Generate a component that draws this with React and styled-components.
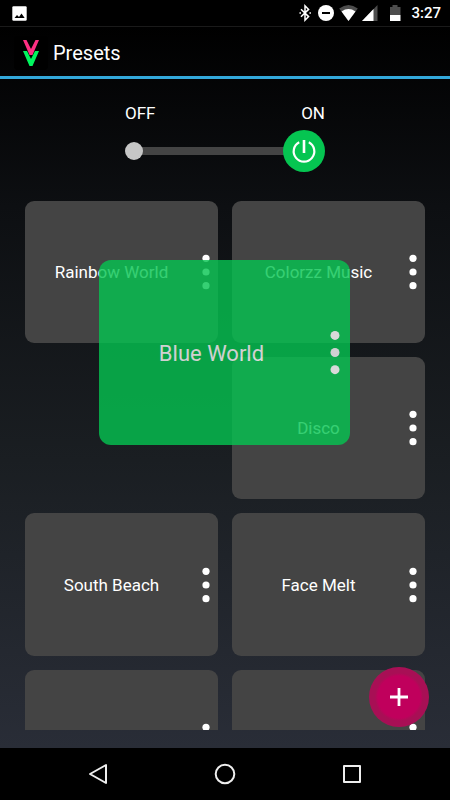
import React, { useState } from "react";
import styled, { createGlobalStyle } from "styled-components";

const GlobalStyle = createGlobalStyle`
  * {
    box-sizing: border-box;
  }

  body {
    margin: 0;
    background: #000;
    color: #fff;
    font-family: Roboto, "Liberation Sans", sans-serif;
  }

  button {
    padding: 0;
    border: 0;
    background: none;
    color: inherit;
    font: inherit;
    cursor: pointer;
  }

  svg {
    display: block;
    flex: none;
  }
`;

const Screen = styled.div`
  position: relative;
  display: flex;
  flex-direction: column;
  height: 100vh;
  overflow: hidden;
`;

const StatusBar = styled.div`
  display: flex;
  align-items: center;
  justify-content: space-between;
  height: 26px;
  padding: 0 9px 0 12px;
  background: #000;
`;

const StatusIcons = styled.div`
  display: flex;
  align-items: center;
  gap: 3px;
`;

const Clock = styled.time`
  margin-left: 7px;
  font-size: 15px;
  line-height: 28px;
  font-weight: 500;
`;

const Window = styled.div`
  display: flex;
  flex: 1;
  flex-direction: column;
  min-height: 0;
  background: linear-gradient(#000, #0d0f12 25%, #1a1e22 60%, #292d37);
`;

const AppBar = styled.header`
  display: flex;
  align-items: center;
  gap: 5px;
  height: 53px;
  padding: 2px 0 0 14px;
  border-top: 1px solid #1a1a1a;
  border-bottom: 3px solid #33a9dc;
`;

const Title = styled.h1`
  margin: 0;
  font-size: 20px;
  line-height: 24px;
  font-weight: 400;
`;

const PowerSection = styled.div`
  display: flex;
  flex-direction: column;
  width: 200px;
  margin: 22px auto 29px;
`;

const PowerLabels = styled.div`
  display: flex;
  justify-content: space-between;
  height: 29px;
  font-size: 17px;
  line-height: 24px;
`;

const PowerSwitch = styled.label`
  position: relative;
  display: flex;
  align-items: center;
  justify-content: ${({ $on }) => ($on ? "flex-end" : "flex-start")};
  height: 42px;
  cursor: pointer;

  &::before {
    content: "";
    position: absolute;
    left: 8px;
    right: 8px;
    height: 8px;
    background: #444;
  }

  &::after {
    content: "";
    position: absolute;
    ${({ $on }) => ($on ? "left: 0;" : "right: 0;")}
    width: 18px;
    height: 18px;
    border-radius: 50%;
    background: #c6c6c6;
  }
`;

const PowerInput = styled.input`
  position: absolute;
  inset: 0;
  margin: 0;
  opacity: 0;
`;

const PowerThumb = styled.span`
  z-index: 1;
  display: grid;
  place-items: center;
  width: 42px;
  height: 42px;
  border-radius: 50%;
  background: #05c551;
`;

const PresetGrid = styled.main`
  display: grid;
  flex: 1;
  grid-template-columns: 1fr 1fr;
  align-content: start;
  gap: 14px;
  min-height: 0;
  margin: 0 25px 18px;
  overflow-y: auto;
  scrollbar-width: none;
`;

const Card = styled.section`
  display: flex;
  align-items: center;
  aspect-ratio: 19 / 14;
  padding-right: 8px;
  border-radius: 9px;
  background: #444;
`;

const CardName = styled.button`
  flex: 1;
  align-self: stretch;
  padding-right: 4px;
  font-size: 17px;
  line-height: 24px;
`;

const DraggedCard = styled(Card)`
  position: absolute;
  left: 99px;
  top: 260px;
  width: 251px;
  padding-right: 10px;
  border-radius: 12px;
  background: #05c551;
  opacity: 0.8;

  ${CardName} {
    padding: 4px 6px 0 0;
    font-size: 22px;
  }
`;

const EmptySlot = styled.div`
  aspect-ratio: 19 / 14;
`;

const AddButton = styled.button`
  position: absolute;
  right: 21px;
  bottom: 73px;
  display: grid;
  place-items: center;
  width: 60px;
  height: 60px;
  border-radius: 50%;
  background: radial-gradient(circle, #c0005c 21px, #a80f55 24px);
`;

const NavBar = styled.nav`
  display: grid;
  grid-template-columns: repeat(3, 1fr);
  height: 52px;
  padding: 0 35px;
  background: #000;
`;

const NavButton = styled.button`
  display: grid;
  place-items: center;
`;

const MenuButton = ({ size = 8 }) => (
  <button aria-label="Preset options">
    <svg width={size} height={(size * 36) / 8} viewBox="0 0 8 36" fill="#fff">
      <circle cx="4" cy="4.3" r="3.6" />
      <circle cx="4" cy="18" r="3.6" />
      <circle cx="4" cy="31.7" r="3.6" />
    </svg>
  </button>
);

const PresetCard = ({ name }) => (
  <Card>
    <CardName>{name}</CardName>
    <MenuButton />
  </Card>
);

const PhotoIcon = () => (
  <svg width="15" height="15" viewBox="0 0 15 15">
    <rect x="0.3" y="0.3" width="14.4" height="14.4" rx="1.2" fill="#fff" />
    <path d="M2.5 12 5 9l2 2 2.500-3.500L12.700 12z" fill="#000" />
  </svg>
);

const BluetoothIcon = () => (
  <svg width="14" height="18" viewBox="0 0 14 18" fill="none" stroke="#fff" strokeWidth="1.5">
    <path d="M3 5.2 10.6 12.6 7 16.2V1.8l3.6 3.6L3 12.8" />
    <path d="M2.2 8.2v1.6M12.2 8.2v1.6" />
  </svg>
);

const DoNotDisturbIcon = () => (
  <svg width="20" height="18" viewBox="0 0 20 18">
    <circle cx="11" cy="9" r="8" fill="#fff" />
    <path d="M7 9h8" stroke="#000" strokeWidth="2" />
  </svg>
);

const WifiIcon = () => (
  <svg width="21" height="18" viewBox="0 0 21 18">
    <path d="M1.200 4.500Q10.500 -2.600 19.800 4.500L10.500 17z" fill="#4d4d4d" />
    <path d="M3.500 7.400Q10.500 2.500 17.500 7.400L10.500 17z" fill="#fff" />
  </svg>
);

const SignalIcon = () => (
  <svg width="16" height="18" viewBox="0 0 16 18">
    <path d="M15.500 1v16H0z" fill="#4d4d4d" />
    <path d="M11.500 5v12H0z" fill="#fff" />
  </svg>
);

const BatteryIcon = () => (
  <svg width="20" height="18" viewBox="0 0 20 18">
    <path d="M11.500 1h5v2h3v8H9V3h2.500z" fill="#4d4d4d" />
    <path d="M9 11h10.500v6H9z" fill="#fff" />
  </svg>
);

const AppLogo = () => (
  <svg width="34" height="34" viewBox="0 0 34 34">
    <rect width="34" height="34" rx="4" fill="#000" />
    <path d="M9 4h3.500L17 13l4.500-9H25l-6.500 15h-3z" fill="#ff2f83" />
    <path d="M9 15h4l4 8 4-8h4l-6.500 15h-3z" fill="#00f55e" />
  </svg>
);

const PowerIcon = () => (
  <svg width="26" height="26" viewBox="0 0 26 26" fill="none" stroke="#fff" strokeWidth="2.2">
    <path d="M8.200 4.200A10.300 10.300 0 1 0 17.800 4.200" />
    <path d="M13 2v13" strokeWidth="2.600" />
  </svg>
);

const presets = ["Rainbow World", "Colorzz Music", null, "Disco", "South Beach", "Face Melt", "", ""];

const App = () => {
  const [isOn, setIsOn] = useState(true);

  return (
    <>
      <GlobalStyle />
      <Screen>
        <StatusBar>
          <PhotoIcon />
          <StatusIcons>
            <BluetoothIcon />
            <DoNotDisturbIcon />
            <WifiIcon />
            <SignalIcon />
            <BatteryIcon />
            <Clock>3:27</Clock>
          </StatusIcons>
        </StatusBar>

        <Window>
          <AppBar>
            <AppLogo />
            <Title>Presets</Title>
          </AppBar>

          <PowerSection>
            <PowerLabels>
              <span>OFF</span>
              <span>ON</span>
            </PowerLabels>
            <PowerSwitch $on={isOn}>
              <PowerInput
                type="checkbox"
                aria-label="Power"
                checked={isOn}
                onChange={() => setIsOn(!isOn)}
              />
              <PowerThumb>
                <PowerIcon />
              </PowerThumb>
            </PowerSwitch>
          </PowerSection>

          <PresetGrid>
            {presets.map((name, index) =>
              name === null ? (
                <EmptySlot key={index} />
              ) : (
                <PresetCard key={index} name={name} />
              )
            )}
          </PresetGrid>
        </Window>

        <DraggedCard>
          <CardName>Blue World</CardName>
          <MenuButton size={10} />
        </DraggedCard>

        <AddButton aria-label="Add preset">
          <svg width="18" height="18" viewBox="0 0 18 18" stroke="#fff" strokeWidth="2.800">
            <path d="M9 0v18M0 9h18" />
          </svg>
        </AddButton>

        <NavBar>
          <NavButton aria-label="Back">
            <svg width="20" height="22" viewBox="0 0 20 22" fill="none" stroke="#eee" strokeWidth="2" strokeLinejoin="round">
              <path d="M18 2v18L2 11z" />
            </svg>
          </NavButton>
          <NavButton aria-label="Home">
            <svg width="22" height="22" viewBox="0 0 22 22" fill="none" stroke="#eee" strokeWidth="2">
              <circle cx="11" cy="11" r="9.300" />
            </svg>
          </NavButton>
          <NavButton aria-label="Recent apps">
            <svg width="20" height="20" viewBox="0 0 20 20" fill="none" stroke="#eee" strokeWidth="2" strokeLinejoin="round">
              <rect x="2" y="2" width="16" height="16" />
            </svg>
          </NavButton>
        </NavBar>
      </Screen>
    </>
  );
};

export default App;
